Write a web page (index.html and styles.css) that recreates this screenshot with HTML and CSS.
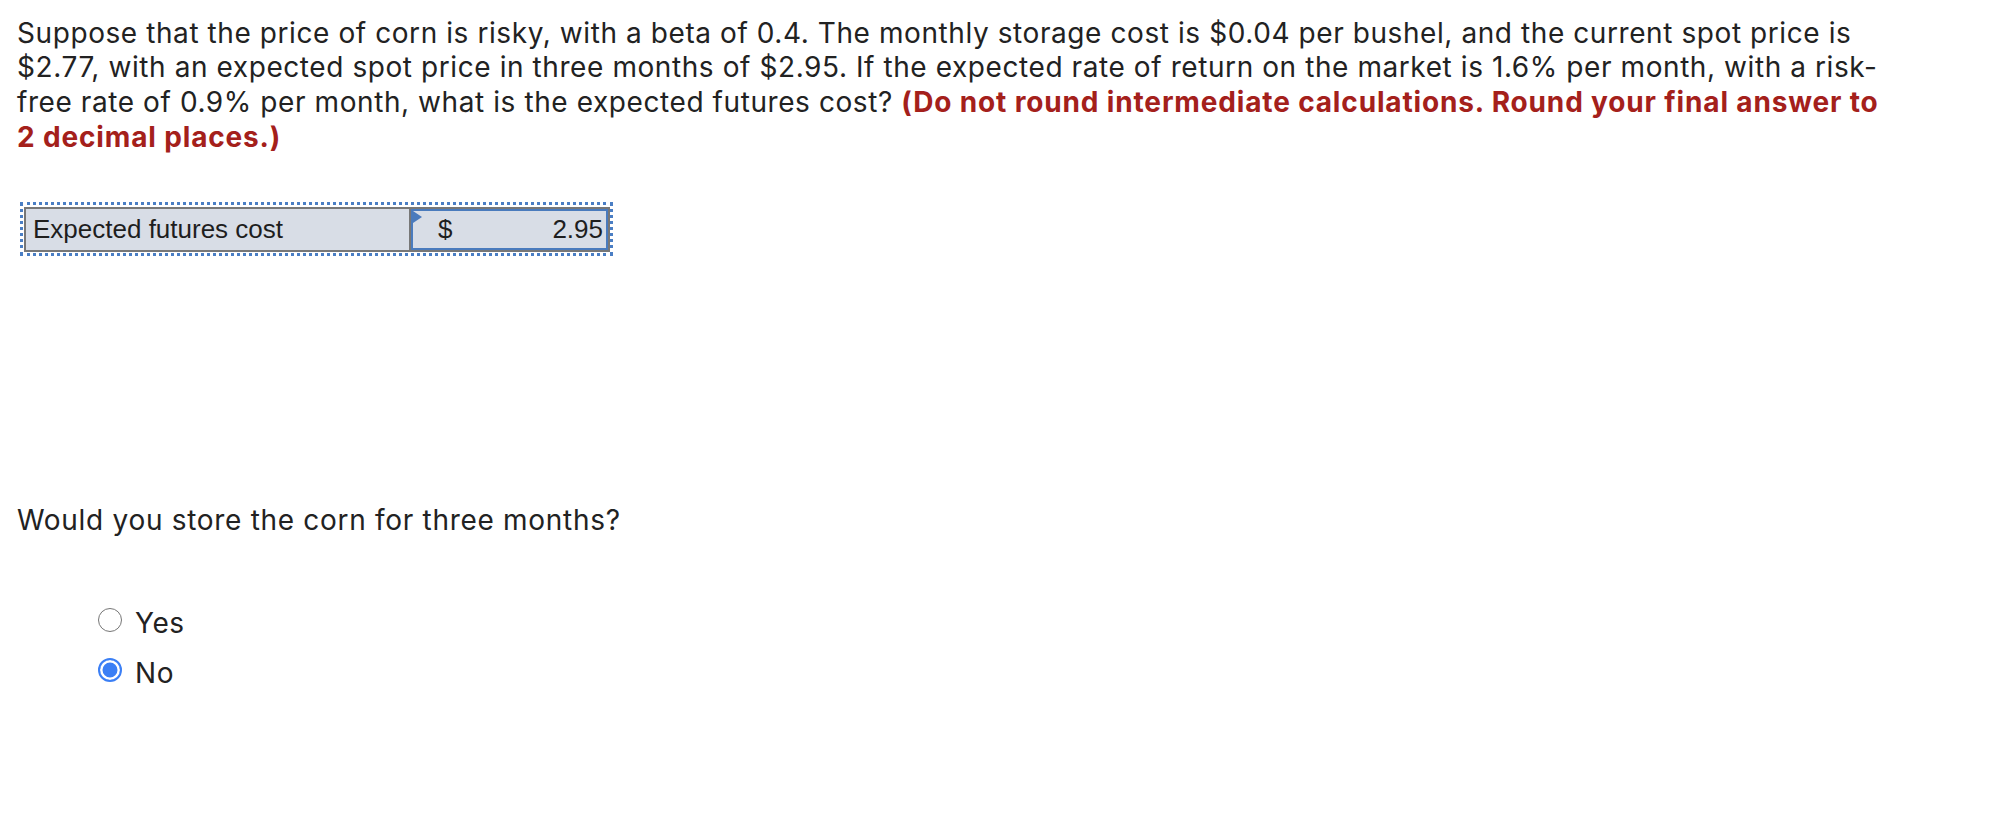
FILE: index.html
```html
<!DOCTYPE html>
<html lang="en">
<head>
<meta charset="utf-8">
<title>Expected futures cost</title>
<link rel="stylesheet" href="styles.css">
</head>
<body>
<main class="page">
  <p class="prompt">Suppose that the price of corn is risky, with a beta of 0.4. The monthly storage cost is $0.04 per bushel, and the current spot price is $2.77, with an expected spot price in three months of $2.95. If the expected rate of return on the market is 1.6% per month, with a risk-free rate of 0.9% per month, what is the expected futures cost? <strong class="hint">(Do not round intermediate calculations. Round your final answer to 2 decimal places.)</strong></p>

  <div class="answer">
    <div class="answer-label">Expected futures cost</div>
    <div class="answer-value">
      <div class="answer-input">
        <span class="answer-flag"></span>
        <span class="answer-currency">$</span>
        <span class="answer-number">2.95</span>
      </div>
    </div>
  </div>

  <p class="question">Would you store the corn for three months?</p>

  <ul class="choices">
    <li class="choice"><span class="radio"></span><span class="choice-text">Yes</span></li>
    <li class="choice"><span class="radio radio-checked"></span><span class="choice-text">No</span></li>
  </ul>
</main>
</body>
</html>
```

FILE: styles.css
```css
html, body {
  margin: 0;
  padding: 0;
  background: #ffffff;
}

.page {
  padding: 15.5px 0 0 17px;
  width: 1871px;
  color: #222222;
  font-family: "Inter", "Lato", sans-serif;
  font-size: 28px;
  line-height: 34.7px;
  letter-spacing: 0.58px;
}

.prompt {
  margin: 0;
}

.hint {
  color: #a4201b;
  font-weight: 700;
  letter-spacing: 0.85px;
}

.answer {
  display: flex;
  width: max-content;
  margin: 48px 0 0 3px;
  border: 3px dotted #4a7ec4;
  padding: 2px 0 1px 1px;
  font-family: "Liberation Sans", Arial, sans-serif;
  font-size: 26px;
  letter-spacing: 0;
  color: #1e1e1e;
}

.answer-label {
  box-sizing: border-box;
  width: 387px;
  height: 45px;
  border: 2px solid #777777;
  background: #d8dde6;
  padding-left: 7px;
  line-height: 41px;
}

.answer-value {
  box-sizing: border-box;
  width: 199px;
  height: 45px;
  border: 2px solid #777777;
  border-left: 0;
}

.answer-input {
  position: relative;
  box-sizing: border-box;
  height: 100%;
  border: 2px solid #4a7bbd;
  background: #d8dde6;
  display: flex;
  justify-content: space-between;
  padding: 0 3px 0 25px;
  line-height: 37px;
}

.answer-flag {
  position: absolute;
  left: 0;
  top: 0;
  width: 0;
  height: 0;
  border-top: 6px solid transparent;
  border-bottom: 6px solid transparent;
  border-left: 9px solid #4a7bbd;
}

.question {
  margin: 247px 0 0 0;
  letter-spacing: 0.7px;
}

.choices {
  list-style: none;
  margin: 60px 0 0 0;
  padding: 0 0 0 81px;
}

.choice {
  display: flex;
  align-items: flex-start;
  height: 50px;
  line-height: 50px;
}

.radio {
  box-sizing: border-box;
  flex: none;
  width: 24px;
  height: 24px;
  margin: 10px 13px 0 0;
  border: 1.5px solid #767676;
  border-radius: 50%;
  background: #ffffff;
}

.radio-checked {
  border: 2px solid #3b7ff5;
  box-shadow: inset 0 0 0 2.5px #ffffff, inset 0 0 0 12px #3b7ff5;
}
```
